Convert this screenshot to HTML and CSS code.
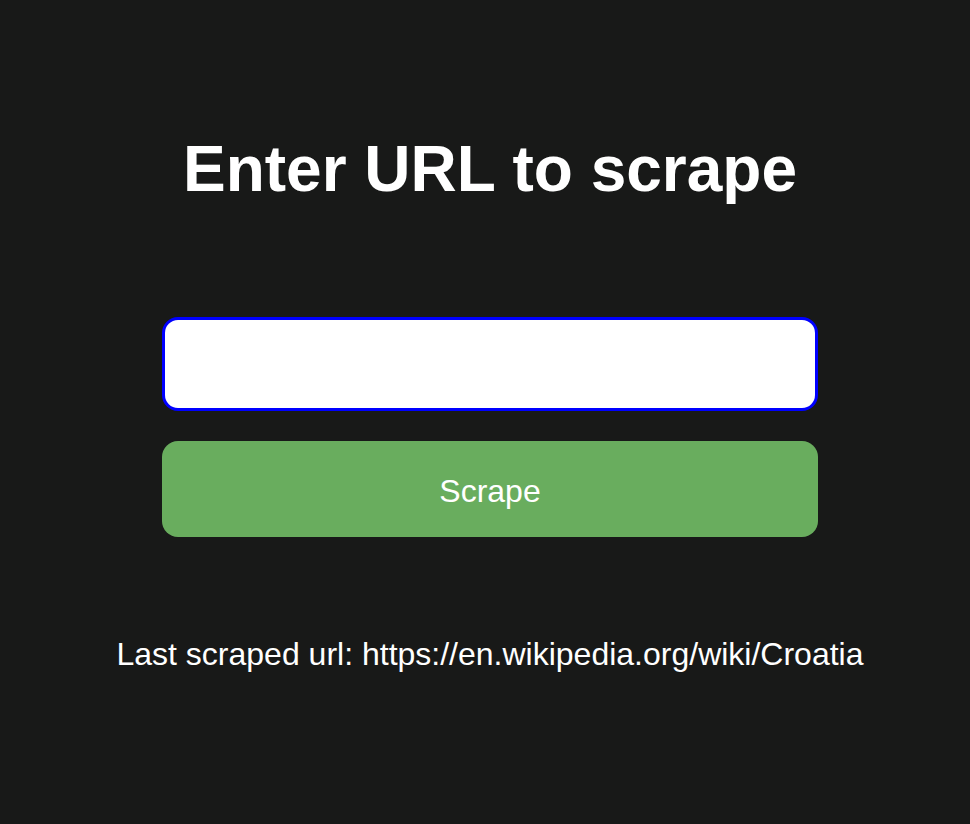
FILE: index.html
```html
<!DOCTYPE html>
<html>
<head>
<meta charset="utf-8">
<link rel="stylesheet" href="styles.css">
</head>
<body>
<main class="page">
  <h1 class="title">Enter URL to scrape</h1>
  <form class="form">
    <input class="url-input" type="text" aria-label="URL">
    <button class="scrape-btn" type="button">Scrape</button>
  </form>
  <p class="last">Last scraped url: https://en.wikipedia.org/wiki/Croatia</p>
</main>
</body>
</html>
```
FILE: styles.css
```css
html, body {
  margin: 0;
  padding: 0;
  background: #181918;
  height: 100%;
}
body {
  font-family: "Liberation Sans", Arial, sans-serif;
  color: #ffffff;
}
.page {
  display: flex;
  flex-direction: column;
  align-items: center;
  padding-top: 132px;
  padding-left: 10px;
}
.title {
  margin: 0;
  font-size: 64px;
  font-weight: bold;
  line-height: 75px;
}
.form {
  display: flex;
  flex-direction: column;
  width: 656px;
  margin-top: 110px;
  gap: 30px;
}
.url-input {
  box-sizing: border-box;
  height: 94px;
  border: 3px solid #0000ff;
  border-radius: 16px;
  background: #ffffff;
  outline: none;
  font-size: 28px;
  padding: 0 16px;
}
.scrape-btn {
  height: 96px;
  border: none;
  border-radius: 16px;
  background: #69ad5e;
  color: #ffffff;
  font-family: "Liberation Sans", Arial, sans-serif;
  font-size: 32px;
  padding: 4px 0 0;
}
.last {
  margin: 99px 0 0;
  font-size: 32px;
  line-height: 37px;
}
```
